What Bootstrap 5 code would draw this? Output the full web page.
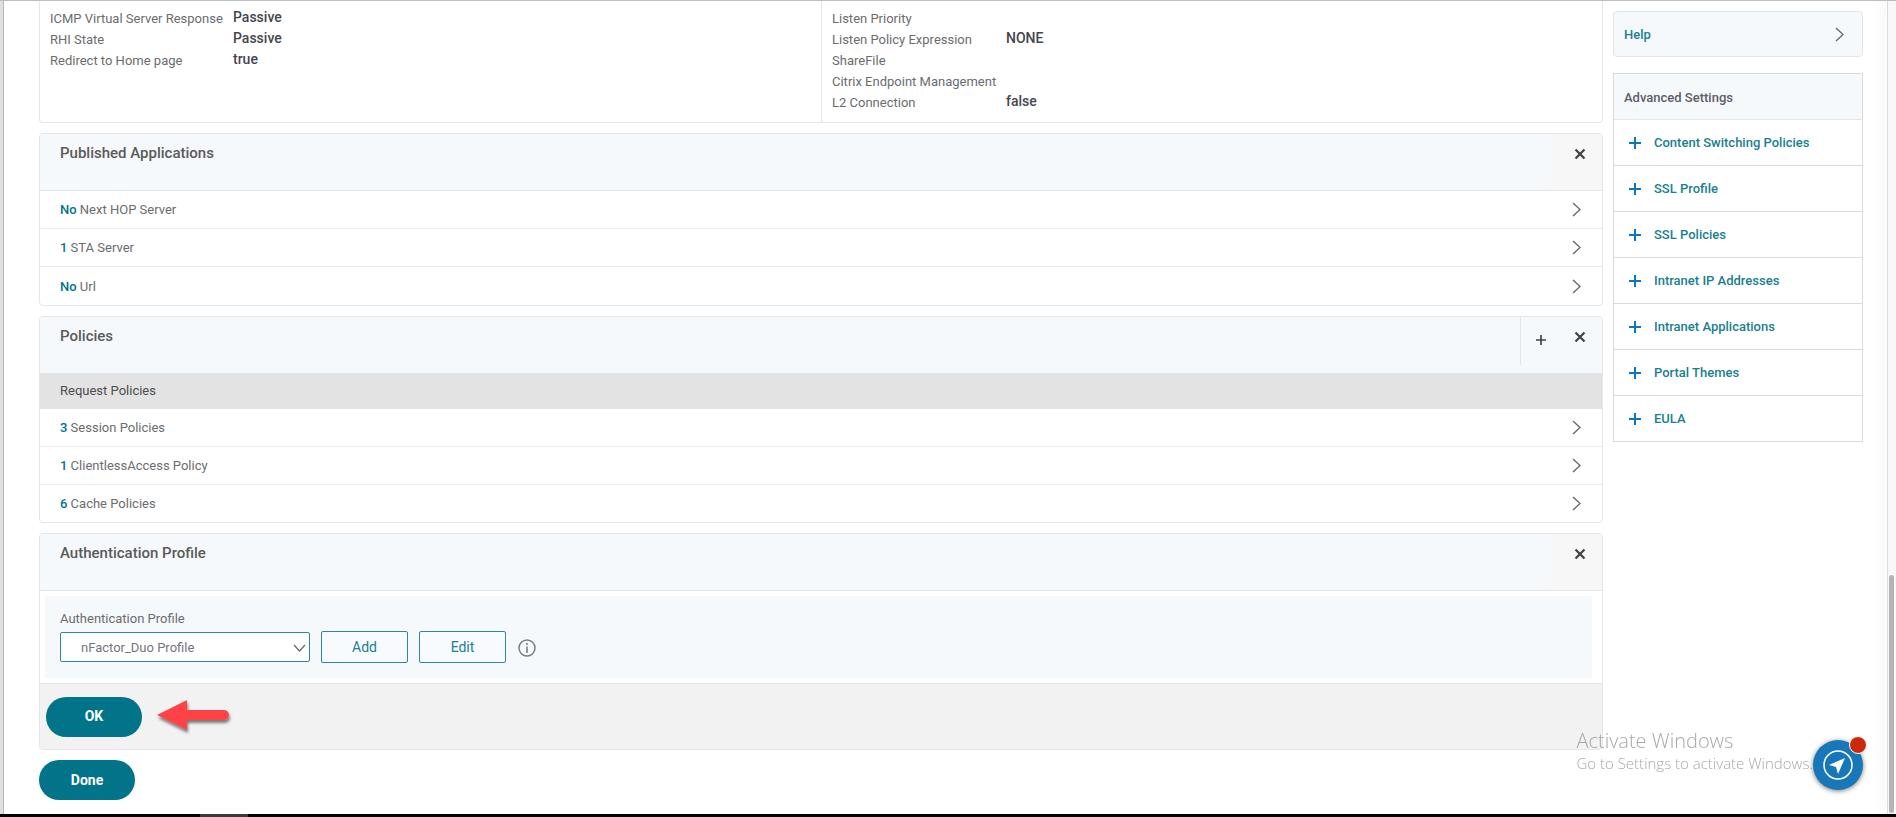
<!DOCTYPE html>
<html lang="en">
<head>
<meta charset="utf-8">
<meta name="viewport" content="width=device-width, initial-scale=1">
<title>VPN Virtual Server</title>
<link rel="stylesheet" href="https://cdn.jsdelivr.net/npm/bootstrap@5.3.0/dist/css/bootstrap.min.css">
<style>
:root{--teal:#02748a;--line:#e4e7ea;--tint:#f5f9fc}
body{font-family:Roboto,"Liberation Sans",sans-serif;font-size:13px;line-height:21px;color:#6c6c6e;background:#fff;border-top:1px solid #bdbdbd}
a{color:inherit;text-decoration:none}
svg{display:block;fill:none;flex-shrink:0}
.rail-left{width:4px;background:#e0e0e0;border-right:1px solid #b8b8b8}
.rail-right{width:9px;background:#f8f8f8;border-left:1px solid #dcdcdc;box-shadow:-6px 0 12px #0000000a;display:flex;flex-direction:column;justify-content:flex-end;padding:0 2px 1px 1px}
.thumb{height:238px;border-radius:3px;background:#b4b4b4}
.page-area{padding-left:35px;padding-right:24px;gap:10px}
.main-col{gap:10px;padding-bottom:14px}
.side-col{width:250px;padding-top:10px}
.panel{border:1px solid var(--line);border-radius:4px;overflow:hidden}
.panel-first{border-top:0;border-radius:0 0 4px 4px}
.facts{padding:7px 10px 9px}
.facts + .facts{border-left:1px solid var(--line)}
.facts dl{display:grid;grid-template-columns:183px 1fr;margin:0}
.facts.wide dl{grid-template-columns:174px 1fr}
.facts dt{font-weight:400}
.facts dd{margin:0;font-weight:500;color:#45454d;font-size:14px;line-height:19px;min-height:21px}
.panel-head{height:57px;background:var(--tint);border-bottom:1px solid var(--line)}
.panel-head.flush{height:56px;border-bottom:0}
.panel-title{font-size:15px;line-height:20px;font-weight:500;color:#5a5a5a;margin:0;padding:9px 20px}
.icon-btn{border:0;background:none;padding:0;color:#414141;display:flex;justify-content:center}
.close-btn{width:52px;padding:14px 0 0 8px}
.close-btn.shade{background:#f7f7f7}
.add-btn{width:30px;height:48px;padding:18px 0 0 11px;border-left:1px solid var(--line)}
.row-link{display:flex;justify-content:space-between;align-items:center;height:38px;padding:0 21px 0 20px;border-bottom:1px solid #e9ebee}
.row-link:last-child{border-bottom:0}
.sub-head ~ .row-link:last-child{height:37px}
.row-link b{font-weight:500;color:var(--teal)}
.sub-head{height:36px;line-height:36px;background:#e3e3e3;padding-left:20px;color:#4d4d4d;margin:0;font-size:13px;font-weight:400}
.field-area{background:var(--tint);margin:5px 10px 5px 5px;padding:12px 15px 15px}
.field-area label{display:block;margin-bottom:2px}
.field-row{gap:11px}
.profile-select{display:block;width:250px;height:30px;border:1px solid #2b8998;border-radius:2px;padding:0 34px 0 20px;color:#747480;font-size:13px;background:#fff;appearance:none}
.select-wrap{position:relative}
.select-wrap svg{position:absolute;right:4px;top:12px;pointer-events:none}
.line-btn{width:87px;height:32px;border:1px solid #2b8998;border-radius:2px;background:#f7fbfd;color:#207f90;font-size:14px;padding:0}
.panel-foot{background:#f2f2f2;border-top:1px solid var(--line);height:66px;padding:0 6px;gap:15px}
.pill{width:96px;height:40px;border:0;border-radius:20px;background:var(--teal);color:#fff;font-weight:700;font-size:14px;display:block}
.help-link{height:46px;padding:1px 18px 0 10px;background:var(--tint);color:#19808f;font-weight:500;border:1px solid var(--line);border-radius:4px;margin-bottom:16px}
.adv{border:1px solid #d8dadd}
.adv h2{font-size:13px;font-weight:500;color:#5d5d65;background:var(--tint);margin:0;height:46px;line-height:47px;padding-left:10px;border-bottom:1px solid var(--line)}
.adv a{display:flex;align-items:center;gap:13px;height:46px;padding-left:15px;color:#19808f;font-weight:500;border-bottom:1px solid #d8dadd}
.adv a:last-child{border-bottom:0;height:45px}
.os-note{position:fixed;right:83px;bottom:44px;color:#a8a8a8;font-family:"Open Sans","Noto Sans",sans-serif;font-weight:300;font-size:15px;line-height:20px;pointer-events:none;white-space:nowrap}
.os-note strong{display:block;font-weight:300;font-size:20px;line-height:24px}
.guide{position:fixed;right:33px;bottom:27px;width:50px;height:50px;border:0;border-radius:50%;background:#1877b9;box-shadow:0 1px 5px #0008;padding:10px}
.guide-dot{position:absolute;right:-4px;top:-4px;width:18px;height:18px;border-radius:50%;background:#cc290b;border:1px solid #fff}
.taskbar{height:3px;background:#000;padding-left:200px}
.taskbar div{width:48px;height:3px;background:#3a3a3c}
</style>
</head>
<body class="d-flex flex-column min-vh-100">
<svg width="0" height="0" class="position-absolute" aria-hidden="true">
<symbol id="chev" viewBox="0 0 9 15"><path d="M1 1l7 6.5L1 14" stroke="#666" stroke-width="1.3"/></symbol>
<symbol id="cross" viewBox="0 0 12 12"><path d="M1.5 1.5l9 9M10.500 1.500l-9 9" stroke="currentColor" stroke-width="2.2"/></symbol>
<symbol id="plus" viewBox="0 0 12 12"><path d="M6 0v12M0 6h12" stroke="currentColor" stroke-width="2"/></symbol>
</svg>
<div class="d-flex flex-grow-1">
  <div class="rail-left"></div>
  <div class="page-area d-flex flex-grow-1">
    <main class="main-col d-flex flex-column flex-grow-1">
      <section class="panel panel-first row g-0">
        <div class="facts col-6"><dl>
          <dt class="text-nowrap">ICMP Virtual Server Response</dt><dd>Passive</dd>
          <dt>RHI State</dt><dd>Passive</dd>
          <dt>Redirect to Home page</dt><dd>true</dd>
        </dl></div>
        <div class="facts wide col-6"><dl>
          <dt>Listen Priority</dt><dd></dd>
          <dt>Listen Policy Expression</dt><dd>NONE</dd>
          <dt>ShareFile</dt><dd></dd>
          <dt class="text-nowrap">Citrix Endpoint Management</dt><dd></dd>
          <dt>L2 Connection</dt><dd>false</dd>
        </dl></div>
      </section>

      <section class="panel">
        <header class="panel-head d-flex">
          <h2 class="panel-title flex-grow-1">Published Applications</h2>
          <button type="button" class="icon-btn close-btn shade" aria-label="Close"><svg width="12" height="12"><use href="#cross"/></svg></button>
        </header>
        <a class="row-link" href="#"><span><b>No</b> Next HOP Server</span><svg width="9" height="15"><use href="#chev"/></svg></a>
        <a class="row-link" href="#"><span><b>1</b> STA Server</span><svg width="9" height="15"><use href="#chev"/></svg></a>
        <a class="row-link" href="#"><span><b>No</b> Url</span><svg width="9" height="15"><use href="#chev"/></svg></a>
      </section>

      <section class="panel">
        <header class="panel-head flush d-flex">
          <h2 class="panel-title flex-grow-1">Policies</h2>
          <button type="button" class="icon-btn add-btn" aria-label="Add"><svg width="10" height="10"><use href="#plus"/></svg></button>
          <button type="button" class="icon-btn close-btn" aria-label="Close"><svg width="12" height="12"><use href="#cross"/></svg></button>
        </header>
        <h3 class="sub-head">Request Policies</h3>
        <a class="row-link" href="#"><span><b>3</b> Session Policies</span><svg width="9" height="15"><use href="#chev"/></svg></a>
        <a class="row-link" href="#"><span><b>1</b> ClientlessAccess Policy</span><svg width="9" height="15"><use href="#chev"/></svg></a>
        <a class="row-link" href="#"><span><b>6</b> Cache Policies</span><svg width="9" height="15"><use href="#chev"/></svg></a>
      </section>

      <section class="panel">
        <header class="panel-head d-flex">
          <h2 class="panel-title flex-grow-1">Authentication Profile</h2>
          <button type="button" class="icon-btn close-btn shade" aria-label="Close"><svg width="12" height="12"><use href="#cross"/></svg></button>
        </header>
        <div class="field-area">
          <label for="profile">Authentication Profile</label>
          <div class="field-row d-flex align-items-center">
            <div class="select-wrap">
              <select id="profile" class="profile-select"><option>nFactor_Duo Profile</option></select>
              <svg width="13" height="8" viewBox="0 0 13 8"><path d="M1 1l5.500 6L12 1" stroke="#666" stroke-width="1.200"/></svg>
            </div>
            <button type="button" class="line-btn">Add</button>
            <button type="button" class="line-btn">Edit</button>
            <svg width="20" height="20" viewBox="-1 -2 20 20" stroke="#7d7d7d"><circle cx="9" cy="9" r="8" stroke-width="1.500"/><path d="M9 7.500V14M9 4v2" stroke-width="1.600"/></svg>
          </div>
        </div>
        <footer class="panel-foot d-flex align-items-center">
          <button type="button" class="pill">OK</button>
          <svg width="76" height="40" viewBox="0 0 76 40"><defs><filter id="shade" x="-10%" y="-20%" width="125%" height="160%"><feDropShadow dx="1" dy="3" stdDeviation="1.500" flood-color="#000" flood-opacity=".5"/></filter></defs><path d="M0 18L30 3V13H67a5 5 0 0 1 0 10H30V33Z" fill="#fe4344" filter="url(#shade)"/></svg>
        </footer>
      </section>
      <div><button type="button" class="pill">Done</button></div>
    </main>

    <aside class="side-col flex-shrink-0">
      <a class="help-link d-flex align-items-center justify-content-between" href="#">Help<svg width="9" height="15"><use href="#chev"/></svg></a>
      <nav class="adv" aria-label="Advanced Settings">
        <h2>Advanced Settings</h2>
        <a href="#"><svg width="12" height="12" color="#0a78bd"><use href="#plus"/></svg>Content Switching Policies</a>
        <a href="#"><svg width="12" height="12" color="#0a78bd"><use href="#plus"/></svg>SSL Profile</a>
        <a href="#"><svg width="12" height="12" color="#0a78bd"><use href="#plus"/></svg>SSL Policies</a>
        <a href="#"><svg width="12" height="12" color="#0a78bd"><use href="#plus"/></svg>Intranet IP Addresses</a>
        <a href="#"><svg width="12" height="12" color="#0a78bd"><use href="#plus"/></svg>Intranet Applications</a>
        <a href="#"><svg width="12" height="12" color="#0a78bd"><use href="#plus"/></svg>Portal Themes</a>
        <a href="#"><svg width="12" height="12" color="#0a78bd"><use href="#plus"/></svg>EULA</a>
      </nav>
    </aside>
  </div>
  <div class="rail-right"><div class="thumb"></div></div>
</div>
<div class="taskbar"><div></div></div>
<div class="os-note"><strong>Activate Windows</strong>Go to Settings to activate Windows.</div>
<button type="button" class="guide" aria-label="Guide me"><svg width="30" height="30" viewBox="0 0 30 30"><circle cx="15" cy="15" r="14" stroke="#fff" stroke-width="1.500"/><path d="M22 8L6 15l7 2 2 7Z" fill="#fff"/></svg><span class="guide-dot"></span></button>
<script src="https://cdn.jsdelivr.net/npm/bootstrap@5.3.0/dist/js/bootstrap.bundle.min.js"></script>
</body>
</html>
